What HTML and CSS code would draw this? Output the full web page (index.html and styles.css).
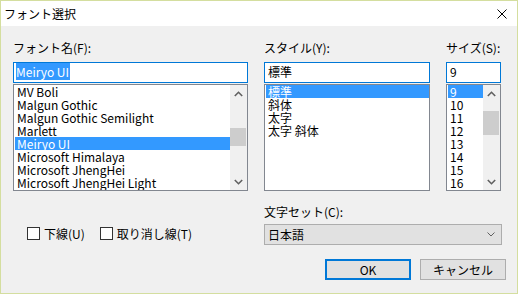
FILE: index.html
```html
<!DOCTYPE html>
<html lang="ja">
<head>
    <meta charset="UTF-8">
    <title>フォント選択</title>
    <link rel="stylesheet" href="styles.css">
</head>
<body>

<div class="window">
    <!-- Title bar -->
    <div class="titlebar">
        <span class="title">フォント選択</span>
        <svg class="close" width="10" height="10" viewBox="0 0 10 10">
            <path d="M0.5 0.5 L9.5 9.5 M9.5 0.5 L0.5 9.5" stroke="#000" stroke-width="1" fill="none"/>
        </svg>
    </div>

    <div class="body">
        <!-- Three pickers -->
        <div class="fields">
            <div class="field field-name">
                <div class="label">フォント名(F):</div>
                <div class="input"><span class="sel-text">Meiryo UI</span></div>
                <div class="list">
                    <div class="items">
                        <div class="item">MV Boli</div>
                        <div class="item">Malgun Gothic</div>
                        <div class="item">Malgun Gothic Semilight</div>
                        <div class="item">Marlett</div>
                        <div class="item selected">Meiryo UI</div>
                        <div class="item">Microsoft Himalaya</div>
                        <div class="item">Microsoft JhengHei</div>
                        <div class="item">Microsoft JhengHei Light</div>
                    </div>
                    <div class="scrollbar">
                        <div class="arrow">
                            <svg width="9" height="6" viewBox="0 0 9 6"><polyline points="0.8,5 4.5,1.3 8.2,5" stroke="#606060" stroke-width="1.6" fill="none"/></svg>
                        </div>
                        <div class="track"><div class="thumb thumb-name"></div></div>
                        <div class="arrow">
                            <svg width="9" height="6" viewBox="0 0 9 6"><polyline points="0.8,1 4.5,4.7 8.2,1" stroke="#606060" stroke-width="1.6" fill="none"/></svg>
                        </div>
                    </div>
                </div>
            </div>

            <div class="field field-style">
                <div class="label">スタイル(Y):</div>
                <div class="input">標準</div>
                <div class="list">
                    <div class="items">
                        <div class="item selected">標準</div>
                        <div class="item">斜体</div>
                        <div class="item">太字</div>
                        <div class="item">太字 斜体</div>
                    </div>
                </div>
            </div>

            <div class="field field-size">
                <div class="label">サイズ(S):</div>
                <div class="input">9</div>
                <div class="list">
                    <div class="items">
                        <div class="item selected">9</div>
                        <div class="item">10</div>
                        <div class="item">11</div>
                        <div class="item">12</div>
                        <div class="item">13</div>
                        <div class="item">14</div>
                        <div class="item">15</div>
                        <div class="item">16</div>
                    </div>
                    <div class="scrollbar">
                        <div class="arrow">
                            <svg width="9" height="6" viewBox="0 0 9 6"><polyline points="0.8,5 4.5,1.3 8.2,5" stroke="#606060" stroke-width="1.6" fill="none"/></svg>
                        </div>
                        <div class="track"><div class="thumb thumb-size"></div></div>
                        <div class="arrow">
                            <svg width="9" height="6" viewBox="0 0 9 6"><polyline points="0.8,1 4.5,4.7 8.2,1" stroke="#606060" stroke-width="1.6" fill="none"/></svg>
                        </div>
                    </div>
                </div>
            </div>
        </div>

        <!-- Effects, charset and buttons -->
        <div class="lower">
            <div class="options">
                <label class="option"><span class="check"></span>下線(U)</label>
                <label class="option"><span class="check"></span>取り消し線(T)</label>
            </div>
            <div class="charset">
                <div class="label">文字セット(C):</div>
                <div class="combo">
                    <span>日本語</span>
                    <svg width="8" height="5" viewBox="0 0 8 5"><polyline points="0.5,0.5 4,4 7.5,0.5" stroke="#606060" stroke-width="1" fill="none"/></svg>
                </div>
                <div class="buttons">
                    <div class="btn btn-default">OK</div>
                    <div class="btn">キャンセル</div>
                </div>
            </div>
        </div>
    </div>
</div>

</body>
</html>
```

FILE: styles.css
```css
/* Page and dialog frame */
body {
    margin: 0;
    font-family: "Noto Sans CJK JP", "Noto Sans", sans-serif;
    font-size: 12px;
    color: #000;
}

.window {
    width: 518px;
    height: 294px;
    box-sizing: border-box;
    border: 1px solid #d4de9f;
    display: flex;
    flex-direction: column;
    background-color: #f0f0f0;
}

/* Title bar */
.titlebar {
    height: 25px;
    background-color: #fff;
    display: flex;
    align-items: center;
    justify-content: space-between;
    padding: 0 10px 0 3px;
    flex-shrink: 0;
}

.title {
    line-height: 16px;
}

/* Dialog content */
.body {
    flex: 1;
    padding: 14px 0 0 12px;
}

.label {
    line-height: 16px;
    height: 16px;
}

.fields {
    display: flex;
}

.field-name {
    width: 235px;
}

.field-style {
    width: 167px;
    margin-left: 16px;
}

.field-size {
    width: 55px;
    margin-left: 15px;
}

/* Edit boxes above the lists */
.input {
    margin-top: 6px;
    height: 21px;
    box-sizing: border-box;
    border: 1px solid #0078d7;
    background-color: #fff;
    padding-left: 3px;
    line-height: 18px;
    white-space: nowrap;
}

.sel-text {
    background-color: #3399ff;
    color: #fff;
    padding: 0 1px 0 0;
    margin-left: -1px;
}

/* List boxes */
.list {
    margin-top: 1px;
    height: 107px;
    box-sizing: border-box;
    border: 1px solid #828790;
    background-color: #fff;
    display: flex;
    padding-left: 1px;
}

.field-style .list,
.field-style .input {
    margin-right: 1px;
}

.items {
    flex: 1;
    overflow: hidden;
}

.item {
    height: 13px;
    line-height: 13px;
    padding-left: 2px;
    white-space: nowrap;
}

.item.selected {
    background-color: #3399ff;
    color: #fff;
}

/* Scroll bars */
.scrollbar {
    width: 17px;
    background-color: #f0f0f0;
    display: flex;
    flex-direction: column;
}

.arrow {
    height: 17px;
    display: flex;
    align-items: center;
    justify-content: center;
}

.track {
    flex: 1;
}

.thumb {
    background-color: #cdcdcd;
    margin: 0 1px 0 0;
}

.thumb-name {
    margin-top: 26px;
    height: 18px;
}

.thumb-size {
    margin-top: 9px;
    height: 24px;
}

/* Lower section */
.lower {
    display: flex;
}

.options {
    width: 236px;
    margin-top: 36px;
    padding-left: 14px;
    display: flex;
    align-items: center;
    gap: 15px;
    height: 13px;
}

.option {
    display: flex;
    align-items: center;
    gap: 4px;
    line-height: 13px;
    white-space: nowrap;
}

.check {
    width: 13px;
    height: 13px;
    box-sizing: border-box;
    border: 1px solid #333;
    background-color: #fff;
}

.charset {
    margin-left: 1px;
    width: 242px;
    padding-top: 13px;
}

.combo {
    margin-top: 4px;
    width: 238px;
    height: 21px;
    box-sizing: border-box;
    border: 1px solid #adadad;
    background-color: #e1e1e1;
    display: flex;
    align-items: center;
    justify-content: space-between;
    padding: 0 6px 0 3px;
}

.buttons {
    margin-top: 14px;
    display: flex;
    justify-content: flex-end;
    gap: 9px;
}

.btn {
    width: 86px;
    height: 21px;
    box-sizing: border-box;
    border: 1px solid #adadad;
    background-color: #e1e1e1;
    display: flex;
    align-items: center;
    justify-content: center;
}

.btn-default {
    border: 2px solid #0078d7;
}
```
